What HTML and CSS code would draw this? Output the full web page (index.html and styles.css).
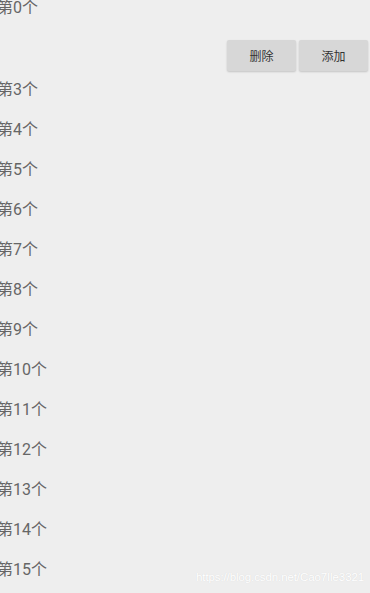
FILE: index.html
```html
<!DOCTYPE html>
<html lang="zh">
<head>
<meta charset="utf-8">
<title>列表</title>
<link rel="stylesheet" href="styles.css">
</head>
<body>
<div class="screen">
  <div class="item first">第0个</div>
  <div class="actions">
    <button class="btn">删除</button>
    <button class="btn">添加</button>
  </div>
  <div class="item">第3个</div>
  <div class="item">第4个</div>
  <div class="item">第5个</div>
  <div class="item">第6个</div>
  <div class="item">第7个</div>
  <div class="item">第8个</div>
  <div class="item">第9个</div>
  <div class="item">第10个</div>
  <div class="item">第11个</div>
  <div class="item">第12个</div>
  <div class="item">第13个</div>
  <div class="item">第14个</div>
  <div class="item">第15个</div>
  <div class="watermark">https://blog.csdn.net/Cao7Ile3321</div>
</div>
</body>
</html>
```
FILE: styles.css
```css
html, body {
  margin: 0;
  padding: 0;
  background: #eeeeee;
}
.screen {
  position: relative;
  width: 370px;
  height: 593px;
  overflow: hidden;
  background: #eeeeee;
  font-family: Roboto, "Noto Sans CJK SC", sans-serif;
}
.item {
  height: 40px;
  line-height: 40px;
  font-size: 16px;
  color: #666666;
  margin-left: -3px;
  white-space: nowrap;
}
.item.first {
  margin-top: -12px;
}
.actions {
  box-sizing: border-box;
  height: 42px;
  padding: 12px 2px 0 0;
  display: flex;
  justify-content: flex-end;
  align-items: flex-start;
  gap: 3px;
}
.btn {
  width: 69px;
  height: 31px;
  border: none;
  border-radius: 2px;
  background: #d7d7d7;
  box-shadow: 0 1px 2px rgba(0, 0, 0, 0.18);
  font-family: Roboto, "Noto Sans CJK SC", sans-serif;
  font-size: 12px;
  color: #333333;
  padding: 0;
  position: relative;
  z-index: 1;
}
.watermark {
  position: absolute;
  left: 196px;
  top: 571px;
  font-family: "Liberation Sans", Arial, sans-serif;
  font-size: 11.5px;
  color: #ffffff;
  letter-spacing: -0.1px;
  text-shadow: 0 0 1px rgba(0, 0, 0, 0.12);
  white-space: nowrap;
}
```
